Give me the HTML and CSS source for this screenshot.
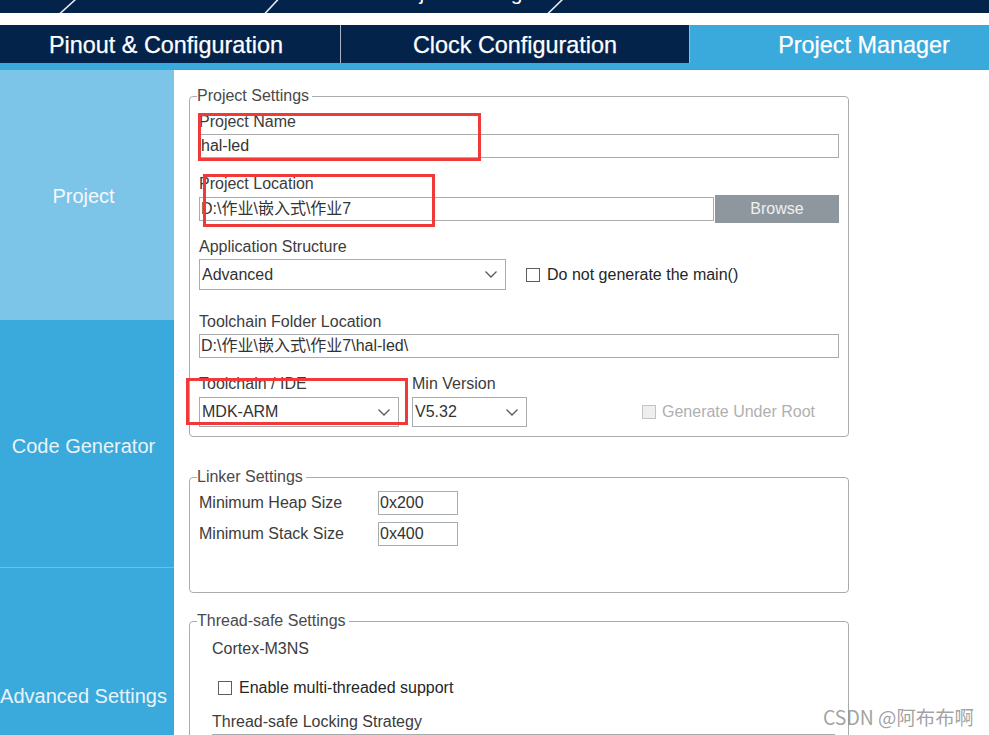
FILE: index.html
```html
<!DOCTYPE html>
<html lang="zh-CN">
<head>
<meta charset="utf-8">
<title>Project Manager</title>
<link rel="stylesheet" href="styles.css">
</head>
<body>
<div class="app">
  <header class="crumbs">
    <svg class="crumb-svg" width="989" height="13" viewBox="0 0 989 13">
      <text class="crumb-text" x="12" y="0">Home</text>
      <line class="crumb-sep" x1="60" y1="13.5" x2="75.5" y2="-0.5"/>
      <text class="crumb-text" x="95" y="0">STM32F103C8Tx</text>
      <line class="crumb-sep" x1="265" y1="13.5" x2="278" y2="-0.5"/>
      <text class="crumb-text" x="541" y="0" text-anchor="end">hal-led.ioc - Project Manager</text>
      <line class="crumb-sep" x1="548" y1="13.5" x2="562.5" y2="-0.5"/>
    </svg>
  </header>

  <nav class="tabs">
    <div class="tab">Pinout &amp; Configuration</div>
    <div class="tab">Clock Configuration</div>
    <div class="tab active">Project Manager</div>
  </nav>
  <div class="strip"></div>

  <div class="main">
    <aside class="side">
      <div class="side-item selected">Project</div>
      <div class="side-item">Code Generator</div>
      <div class="side-item last">Advanced Settings</div>
    </aside>

    <section class="content">
      <fieldset class="group g-project">
        <legend>Project Settings</legend>

        <label class="lbl">Project Name</label>
        <div class="input mt3">hal-led</div>

        <label class="lbl mt17">Project Location</label>
        <div class="loc-row">
          <div class="input grow">D:\作业\嵌入式\作业7</div>
          <div class="btn">Browse</div>
        </div>

        <label class="lbl mt15">Application Structure</label>
        <div class="app-row">
          <div class="select sel-app">
            <span>Advanced</span>
            <svg class="chev" width="12" height="7" viewBox="0 0 12 7"><polyline points="0.5,0.5 6,6 11.5,0.5"/></svg>
          </div>
          <div class="check">
            <span class="cb"></span>
            <span class="cb-text">Do not generate the main()</span>
          </div>
        </div>

        <label class="lbl mt23">Toolchain Folder Location</label>
        <div class="input mt3">D:\作业\嵌入式\作业7\hal-led\</div>

        <div class="tool-row">
          <div class="col col-ide">
            <label class="lbl">Toolchain / IDE</label>
            <div class="select sel-tool">
              <span>MDK-ARM</span>
              <svg class="chev" width="12" height="7" viewBox="0 0 12 7"><polyline points="0.5,0.5 6,6 11.5,0.5"/></svg>
            </div>
          </div>
          <div class="col col-ver">
            <label class="lbl">Min Version</label>
            <div class="select sel-tool">
              <span>V5.32</span>
              <svg class="chev" width="12" height="7" viewBox="0 0 12 7"><polyline points="0.5,0.5 6,6 11.5,0.5"/></svg>
            </div>
          </div>
          <div class="check disabled">
            <span class="cb"></span>
            <span class="cb-text">Generate Under Root</span>
          </div>
        </div>
      </fieldset>

      <fieldset class="group g-linker">
        <legend>Linker Settings</legend>
        <div class="linker-grid">
          <span class="lbl">Minimum Heap Size</span>
          <div class="input">0x200</div>
          <span class="lbl">Minimum Stack Size</span>
          <div class="input">0x400</div>
        </div>
      </fieldset>

      <fieldset class="group g-thread">
        <legend>Thread-safe Settings</legend>
        <div class="indent">
          <div class="lbl">Cortex-M3NS</div>
          <div class="check thread-check">
            <span class="cb"></span>
            <span class="cb-text">Enable multi-threaded support</span>
          </div>
          <label class="lbl mt16">Thread-safe Locking Strategy</label>
          <div class="select sel-lock"></div>
        </div>
      </fieldset>
    </section>
  </div>

  <div class="mark mark-name"></div>
  <div class="mark mark-loc"></div>
  <div class="mark mark-ide"></div>

  <div class="watermark">CSDN @阿布布啊</div>
</div>
</body>
</html>
```

FILE: styles.css
```css
* { box-sizing: border-box; }

html, body {
  margin: 0;
  padding: 0;
  background: #fff;
}

body {
  font-family: "Liberation Sans", "Noto Sans CJK SC", Arial, sans-serif;
}

.app {
  position: relative;
  width: 989px;
  height: 735px;
  overflow: hidden;
  background: #fff;
}

/* breadcrumb band */
.crumbs {
  height: 13px;
  background: #03234b;
  margin-bottom: 12px;
}
.crumb-svg { display: block; }
.crumb-text {
  font-family: "Liberation Sans", Arial, sans-serif;
  font-size: 21px;
  fill: #ffffff;
}
.crumb-sep {
  stroke: #e8edf3;
  stroke-width: 1.6;
}

/* tabs */
.tabs {
  display: flex;
  margin-left: -8px;
  width: 1060px;
  height: 38px;
}
.tab {
  flex: none;
  width: 348px;
  background: #03234b;
  color: #fff;
  font-size: 23.4px;
  display: flex;
  align-items: center;
  justify-content: center;
  padding-top: 2px;
  -webkit-text-stroke: 0.25px #fff;
}
.tab + .tab {
  width: 349px;
  border-left: 1px solid #aab4c0;
}
.tab.active { background: #3aa9dc; }

.strip {
  height: 7px;
  background: #3aa9dc;
}

/* main */
.main {
  display: flex;
  height: 665px;
}

.side {
  flex: none;
  width: 174px;
  background: #3aa9dc;
  display: flex;
  flex-direction: column;
}
.side-item {
  flex: none;
  height: 248px;
  border-bottom: 1px solid #6cc0e7;
  display: flex;
  align-items: center;
  justify-content: center;
  padding: 6px 7px 0 0;
  color: #e9f4fa;
  font-size: 20px;
  white-space: nowrap;
}
.side-item.selected {
  height: 250px;
  background: #7dc4e9;
  border-bottom: none;
  padding-top: 2px;
  color: #f4f9fd;
}
.side-item.last {
  height: 167px;
  border-bottom: none;
  padding-top: 89px;
}

.content {
  flex: 1;
  padding-left: 15px;
}

/* group boxes */
.group {
  width: 660px;
  min-width: 0;
  margin: 0;
  border: 1px solid #a9acaf;
  border-radius: 4px;
  padding: 8px 9px 9px;
}
.group legend {
  padding: 0 3px 0 0;
  margin-left: -2px;
  font-size: 16px;
  line-height: 18px;
  color: #4a4a4a;
}
.g-project { margin-top: 17px; }
.g-linker {
  margin-top: 31px;
  padding-top: 5px;
  padding-bottom: 46px;
}
.g-thread {
  margin-top: 19px;
  padding-top: 10px;
  padding-bottom: 40px;
}

.lbl {
  display: block;
  font-size: 16px;
  line-height: 18px;
  color: #3c3c3c;
  white-space: nowrap;
}

.mt3 { margin-top: 3px; }
.mt4 { margin-top: 4px; }
.mt15 { margin-top: 15px; }
.mt16 { margin-top: 16px; }
.mt17 { margin-top: 17px; }
.mt23 { margin-top: 23px; }

.input {
  height: 24px;
  border: 1px solid #a9acaf;
  background: #fff;
  font-size: 16px;
  line-height: 22px;
  padding: 0 1px;
  color: #333;
  white-space: nowrap;
  overflow: hidden;
}

.loc-row {
  display: flex;
  align-items: center;
  gap: 1px;
  height: 28px;
  margin-top: 2px;
}
.grow { flex: 1; }
.btn {
  flex: none;
  width: 124px;
  height: 28px;
  background: #8e979d;
  color: #eef0f2;
  font-size: 16px;
  display: flex;
  align-items: center;
  justify-content: center;
}

.select {
  display: flex;
  align-items: center;
  justify-content: space-between;
  border: 1px solid #a9acaf;
  background: #fff;
  padding: 0 8px 0 2px;
  font-size: 16px;
  color: #333;
}
.chev {
  display: block;
  flex: none;
}
.chev polyline {
  fill: none;
  stroke: #5a5a5a;
  stroke-width: 1.3;
}

.app-row {
  display: flex;
  align-items: center;
  margin-top: 3px;
}
.sel-app {
  width: 307px;
  height: 31px;
}

.check {
  display: flex;
  align-items: center;
  gap: 7px;
}
.app-row .check { margin-left: 20px; }
.cb {
  flex: none;
  width: 14px;
  height: 14px;
  border: 1px solid #5e5e5e;
  background: #fff;
}
.cb-text {
  font-size: 16px;
  line-height: 18px;
  color: #262626;
  white-space: nowrap;
}
.check.disabled .cb {
  border-color: #c4c4c4;
  background: #eeeeee;
}
.check.disabled .cb-text { color: #b0b0b0; }

.tool-row {
  display: flex;
  align-items: flex-end;
  margin-top: 17px;
}
.col { display: flex; flex-direction: column; }
.col .select { margin-top: 4px; height: 30px; }
.col-ide { width: 200px; }
.col-ver { width: 115px; margin-left: 13px; }
.tool-row .check.disabled {
  height: 30px;
  margin-left: 115px;
  gap: 6px;
}

/* linker */
.linker-grid {
  display: grid;
  grid-template-columns: 179px 80px;
  grid-auto-rows: 24px;
  row-gap: 7px;
  align-items: center;
}

/* thread-safe */
.indent { padding-left: 13px; }
.thread-check {
  margin-top: 21px;
  margin-left: 6px;
  height: 18px;
}
.sel-lock {
  margin-top: 3px;
  width: 623px;
  height: 30px;
}

/* red annotation boxes */
.mark {
  position: absolute;
  border: 3px solid #f03a3a;
}
.mark-name { left: 198px; top: 113px; width: 283px; height: 48px; }
.mark-loc  { left: 203px; top: 174px; width: 232px; height: 53px; }
.mark-ide  { left: 186px; top: 378px; width: 222px; height: 47px; }

.watermark {
  position: absolute;
  left: 823px;
  top: 706px;
  font-family: "Noto Sans CJK SC", sans-serif;
  font-size: 19.4px;
  line-height: 22px;
  color: rgba(120, 120, 120, 0.7);
  white-space: nowrap;
}
```
